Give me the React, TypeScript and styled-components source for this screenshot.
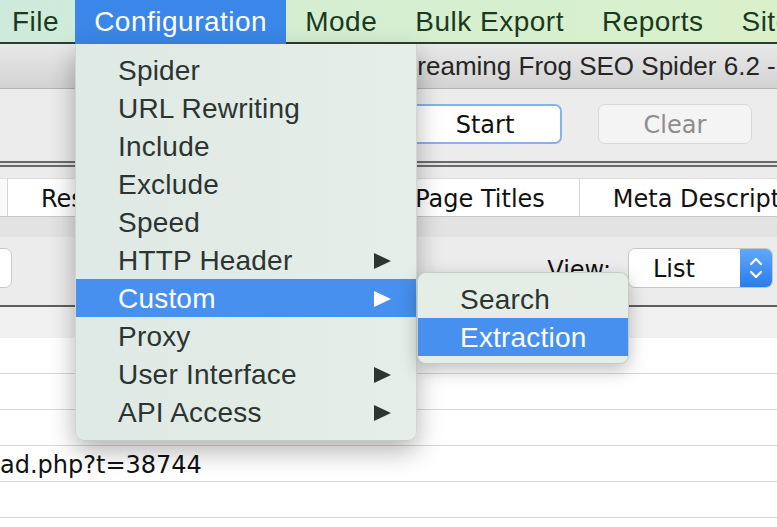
import React from "react"
import styled, { createGlobalStyle } from "styled-components"

const GlobalStyle = createGlobalStyle`
  html, body {
    margin: 0;
    padding: 0;
    background: #ececec;
  }
  * {
    box-sizing: border-box;
  }
`

const Screen = styled.div`
  position: relative;
  width: 777px;
  height: 527px;
  overflow: hidden;
  background: #ececec;
  font-family: "DejaVu Sans", "Liberation Sans", sans-serif;
`

const MenuBar = styled.div`
  display: flex;
  align-items: stretch;
  height: 44px;
  padding-left: 12px;
  background: linear-gradient(90deg, #cdeadd 0%, #d4eed2 35%, #d9f0ca 100%);
  box-shadow: inset 0 -2px 0 #2b3d2f;
  font-family: "Liberation Sans", Arial, sans-serif;
  font-size: 28px;
  letter-spacing: 0.5px;
  white-space: nowrap;
`

const MenuTitle = styled.div<{ $active?: boolean; $first?: boolean }>`
  display: flex;
  align-items: center;
  padding-left: ${(p) => (p.$first ? "0" : "19px")};
  padding-right: ${(p) => (p.$first ? "16px" : "19px")};
  color: ${(p) => (p.$active ? "#ffffff" : "#1b3a1d")};
  background: ${(p) => (p.$active ? "#3b86e9" : "transparent")};
`

const TitleBar = styled.div`
  height: 45px;
  padding-left: 387px;
  display: flex;
  align-items: center;
  background: linear-gradient(180deg, #e9e9e9 0%, #d3d3d3 100%);
  border-bottom: 1px solid #b3b3b3;
  font-family: "Liberation Sans", Arial, sans-serif;
  font-size: 26px;
  color: #262626;
  white-space: nowrap;
  overflow: hidden;
`

const Toolbar = styled.div`
  height: 72px;
  display: flex;
  justify-content: flex-end;
  align-items: flex-start;
  gap: 36px;
  padding: 15px 25px 0 0;
`

const ToolButton = styled.div<{ $primary?: boolean }>`
  width: 154px;
  height: 40px;
  display: flex;
  align-items: center;
  justify-content: center;
  padding-top: 2px;
  font-size: 24px;
  border-radius: 7px;
  background: ${(p) => (p.$primary ? "#ffffff" : "#f4f4f4")};
  color: ${(p) => (p.$primary ? "#111111" : "#8d8d8d")};
  border: ${(p) => (p.$primary ? "2px solid #86b4ea" : "1px solid #d9d9d9")};
`

const DoubleRule = styled.div`
  height: 6px;
  border-top: 2px solid #6b6b6b;
  border-bottom: 2px solid #6b6b6b;
  background: #e4e4e4;
`

const TabArea = styled.div`
  padding-top: 11px;
`

const TabStrip = styled.div`
  display: flex;
  height: 39px;
  padding-left: 7px;
  background: #fafafa;
  border-top: 1px solid #dcdcdc;
  border-bottom: 1px solid #c8c8c8;
  white-space: nowrap;
  overflow: hidden;
`

const Tab = styled.div`
  display: flex;
  align-items: center;
  padding: 3px 34px 0 33px;
  background: #ffffff;
  border-left: 1px solid #d6d6d6;
  font-size: 24px;
  color: #111111;
`

const Band = styled.div`
  height: 20px;
  background: #e3e3e3;
`

const FilterRow = styled.div`
  height: 68px;
  display: flex;
  align-items: flex-start;
  padding: 11px 4px 0 0;
`

const SearchBox = styled.div`
  width: 52px;
  height: 40px;
  margin-left: -40px;
  background: #ffffff;
  border: 1px solid #c9c9c9;
  border-radius: 7px;
`

const ViewLabel = styled.div`
  margin-left: auto;
  margin-right: 17px;
  padding-top: 8px;
  font-size: 24px;
  color: #111111;
`

const Select = styled.div`
  width: 145px;
  height: 40px;
  display: flex;
  align-items: stretch;
  background: #ffffff;
  border: 1px solid #c6c6c6;
  border-radius: 7px;
  overflow: hidden;
`

const SelectValue = styled.div`
  flex: 1;
  display: flex;
  align-items: center;
  padding: 2px 0 0 24px;
  font-size: 24px;
  color: #111111;
`

const Stepper = styled.div`
  width: 32px;
  display: flex;
  align-items: center;
  justify-content: center;
  background: linear-gradient(180deg, #62a8fa 0%, #2a7cec 100%);
`

const Rule = styled.div`
  height: 2px;
  background: #5e5e5e;
`

const TableHeader = styled.div`
  height: 31px;
  background: #f1f1f1;
`

const Row = styled.div`
  height: 36px;
  display: flex;
  align-items: center;
  padding-top: 2px;
  background: #ffffff;
  border-bottom: 1px solid #d7d7d7;
  font-size: 24px;
  color: #111111;
  white-space: nowrap;
`

const Menu = styled.div`
  position: absolute;
  left: 75px;
  top: 44px;
  width: 342px;
  padding: 7px 0 9px;
  background: linear-gradient(90deg, #dfe9e5 0%, #e5eee8 100%);
  border-left: 1px solid #cdd6d2;
  border-right: 1px solid #cdd6d2;
  border-bottom: 1px solid #c4ccc8;
  border-radius: 0 0 9px 9px;
  box-shadow: 0 10px 26px rgba(0, 0, 0, 0.3);
  font-family: "Liberation Sans", Arial, sans-serif;
`

const SubMenu = styled(Menu)`
  left: 417px;
  top: 272px;
  width: 212px;
  padding: 7px 0;
  border: 1px solid #c4ccc8;
  border-radius: 9px;
  background: #e4eee7;
  box-shadow: 0 6px 18px rgba(0, 0, 0, 0.25);
`

const MenuItem = styled.div<{ $active?: boolean; $indent: number }>`
  height: 38px;
  display: flex;
  align-items: center;
  justify-content: space-between;
  padding: 1px 25px 0 ${(p) => p.$indent}px;
  font-size: 28px;
  letter-spacing: 0.2px;
  color: ${(p) => (p.$active ? "#ffffff" : "#2c3531")};
  background: ${(p) => (p.$active ? "#4790ef" : "transparent")};
`

const Arrow = ({ color }: { color: string }) => (
  <svg width="17" height="16" viewBox="0 0 17 16">
    <polygon points="0,0 17,8 0,16" fill={color} />
  </svg>
)

const Chevrons = () => (
  <svg width="14" height="26" viewBox="0 0 14 26">
    <polyline points="2,9 7,4 12,9" fill="none" stroke="#ffffff" strokeWidth="2.2" strokeLinecap="round" strokeLinejoin="round" />
    <polyline points="2,17 7,22 12,17" fill="none" stroke="#ffffff" strokeWidth="2.2" strokeLinecap="round" strokeLinejoin="round" />
  </svg>
)

const menuTitles = ["File", "Configuration", "Mode", "Bulk Export", "Reports", "Site Architecture"]

const configItems = [
  { label: "Spider" },
  { label: "URL Rewriting" },
  { label: "Include" },
  { label: "Exclude" },
  { label: "Speed" },
  { label: "HTTP Header", sub: true },
  { label: "Custom", sub: true, active: true },
  { label: "Proxy" },
  { label: "User Interface", sub: true },
  { label: "API Access", sub: true },
]

const tabs = ["Response Codes", "URI", "Page Titles", "Meta Description", "Meta Keywords"]

const rows = ["", "", "", "ad.php?t=38744", "", ""]

const App = () => {
  return (
    <Screen>
      <GlobalStyle />
      <MenuBar>
        {menuTitles.map((title, idx) => (
          <MenuTitle key={title} $first={idx === 0} $active={title === "Configuration"}>
            {title}
          </MenuTitle>
        ))}
      </MenuBar>
      <TitleBar>Screaming Frog SEO Spider 6.2 - Licensed</TitleBar>
      <Toolbar>
        <ToolButton $primary>Start</ToolButton>
        <ToolButton>Clear</ToolButton>
      </Toolbar>
      <DoubleRule />
      <TabArea>
        <TabStrip>
          {tabs.map((tab) => (
            <Tab key={tab}>{tab}</Tab>
          ))}
        </TabStrip>
      </TabArea>
      <Band />
      <FilterRow>
        <SearchBox />
        <ViewLabel>View:</ViewLabel>
        <Select>
          <SelectValue>List</SelectValue>
          <Stepper>
            <Chevrons />
          </Stepper>
        </Select>
      </FilterRow>
      <Rule />
      <TableHeader />
      {rows.map((text, idx) => (
        <Row key={idx}>{text}</Row>
      ))}

      <Menu>
        {configItems.map((item) => (
          <MenuItem key={item.label} $indent={42} $active={item.active}>
            <span>{item.label}</span>
            {item.sub && <Arrow color={item.active ? "#ffffff" : "#2c3531"} />}
          </MenuItem>
        ))}
      </Menu>
      <SubMenu>
        <MenuItem $indent={42}>Search</MenuItem>
        <MenuItem $indent={42} $active>Extraction</MenuItem>
      </SubMenu>
    </Screen>
  )
}

export default App
